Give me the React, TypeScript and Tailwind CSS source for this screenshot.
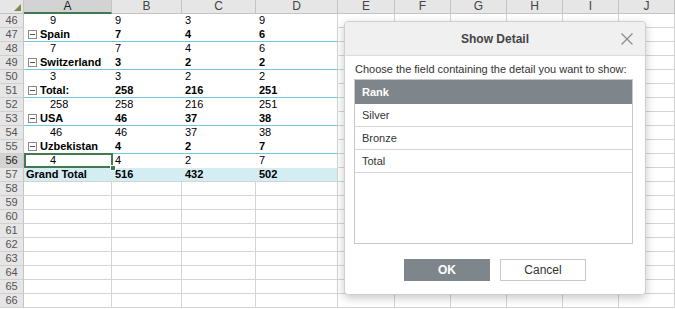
import React from "react";

type Row = {
  n: number;
  a?: string;
  kind?: "detail" | "group" | "grand" | "empty";
  b?: string;
  c?: string;
  d?: string;
};

const rows: Row[] = [
  { n: 46, kind: "detail", a: "9", b: "9", c: "3", d: "9" },
  { n: 47, kind: "group", a: "Spain", b: "7", c: "4", d: "6" },
  { n: 48, kind: "detail", a: "7", b: "7", c: "4", d: "6" },
  { n: 49, kind: "group", a: "Switzerland", b: "3", c: "2", d: "2" },
  { n: 50, kind: "detail", a: "3", b: "3", c: "2", d: "2" },
  { n: 51, kind: "group", a: "Total:", b: "258", c: "216", d: "251" },
  { n: 52, kind: "detail", a: "258", b: "258", c: "216", d: "251" },
  { n: 53, kind: "group", a: "USA", b: "46", c: "37", d: "38" },
  { n: 54, kind: "detail", a: "46", b: "46", c: "37", d: "38" },
  { n: 55, kind: "group", a: "Uzbekistan", b: "4", c: "2", d: "7" },
  { n: 56, kind: "detail", a: "4", b: "4", c: "2", d: "7" },
  { n: 57, kind: "grand", a: "Grand Total", b: "516", c: "432", d: "502" },
];
for (let i = 58; i <= 66; i++) rows.push({ n: i, kind: "empty" });

const colLetters = ["A", "B", "C", "D", "E", "F", "G", "H", "I", "J"];

function MinusBox() {
  return (
    <span className="inline-flex items-center justify-center w-[9px] h-[9px] border border-[#8a8a8a] bg-white mr-[3px] shrink-0">
      <span className="block w-[5px] h-px bg-[#555]" />
    </span>
  );
}

function RowCells({ r }: { r: Row }) {
  const selectedRow = r.n === 56;
  const header = (
    <div
      className={`h-[14px] border-r border-b border-r-[#c4c4c4] border-b-[#d0d0d0] text-[11px] leading-[13px] text-center ${
        selectedRow ? "bg-[#d3d3d3] text-[#222]" : "bg-[#e6e6e6] text-[#555]"
      }`}
    >
      {r.n}
    </div>
  );

  const emptyRest = [4, 5, 6, 7, 8, 9].map((i) => (
    <div key={i} className="h-[14px] border-r border-b border-[#d4d4d4] bg-white" />
  ));

  if (r.kind === "empty") {
    return (
      <>
        {header}
        {[0, 1, 2, 3].map((i) => (
          <div key={i} className="h-[14px] border-r border-b border-[#d4d4d4] bg-white" />
        ))}
        {emptyRest}
      </>
    );
  }

  const bold = r.kind === "group" || r.kind === "grand";
  const bottom =
    r.kind === "group"
      ? "border-b-[#6ccbdc]"
      : r.kind === "grand"
      ? "border-b-[#d4d4d4]"
      : "border-b-white";
  const bg = r.kind === "grand" ? "bg-[#d3edf3]" : "bg-white";
  const weight = bold ? "font-bold" : "font-normal";
  const base = `h-[14px] border-b ${bottom} ${bg} ${weight} text-[11px] leading-[13px] text-black whitespace-nowrap`;

  return (
    <>
      {header}
      <div
        className={`${base} relative flex items-center ${selectedRow ? "z-10" : "overflow-hidden"} ${
          r.kind === "detail" ? "pl-[26px]" : r.kind === "grand" ? "pl-[2px]" : "pl-[4px]"
        }`}
      >
        {r.kind === "group" && <MinusBox />}
        <span>{r.a}</span>
        {selectedRow && (
          <>
            <span className="absolute left-0 top-[-1px] right-[-1px] bottom-[-1px] border-2 border-[#3f7a52] pointer-events-none" />
            <span className="absolute right-[-4px] bottom-[-4px] w-[6px] h-[6px] bg-[#3f7a52] border border-white" />
          </>
        )}
      </div>
      <div className={`${base} overflow-hidden pl-[3px] flex items-center`}>{r.b}</div>
      <div className={`${base} overflow-hidden pl-[3px] flex items-center`}>{r.c}</div>
      <div className={`${base} overflow-hidden pl-[3px] flex items-center border-r border-r-[#d4d4d4]`}>{r.d}</div>
      {emptyRest}
    </>
  );
}

function Dialog() {
  return (
    <div className="absolute z-20 left-[344px] top-[21px] w-[302px] h-[274px] rounded-[4px] border border-[#cfcfcf] bg-white shadow-[0_3px_10px_rgba(0,0,0,0.22)] flex flex-col font-['Liberation_Sans',Arial,sans-serif]">
      <div className="relative h-[34px] shrink-0 bg-[#f0f0f0] border-b border-[#dcdcdc] rounded-t-[4px] flex items-center justify-center">
        <span className="text-[12px] font-bold text-[#444]">Show Detail</span>
        <svg className="absolute right-[12px] top-[11px]" width="12" height="12" viewBox="0 0 12 12">
          <path d="M0.5 0.5 L11.5 11.5 M11.5 0.5 L0.5 11.5" stroke="#8a8a8a" strokeWidth="1.2" fill="none" />
        </svg>
      </div>
      <div className="flex flex-col pl-[9px] pr-[12px] pt-[6px]">
        <div className="text-[11px] leading-[14px] text-[#333] pl-[1px] whitespace-nowrap">
          Choose the field containing the detail you want to show:
        </div>
        <div className="mt-[3px] h-[165px] border border-[#c8c8c8] flex flex-col">
          <div className="h-[24px] shrink-0 bg-[#7f868b] text-white font-bold text-[11px] flex items-center pl-[7px]">
            Rank
          </div>
          {["Silver", "Bronze", "Total"].map((t) => (
            <div
              key={t}
              className="h-[23px] shrink-0 border-b border-[#d4d4d4] text-[11px] text-[#333] flex items-center pl-[7px]"
            >
              {t}
            </div>
          ))}
        </div>
        <div className="mt-[15px] flex justify-center gap-[10px] pl-[3px]">
          <div className="w-[86px] h-[22px] bg-[#7f868b] text-white font-bold text-[12px] flex items-center justify-center">
            OK
          </div>
          <div className="w-[86px] h-[22px] bg-white border border-[#c8c8c8] text-[#333] text-[12px] flex items-center justify-center">
            Cancel
          </div>
        </div>
      </div>
    </div>
  );
}

export default function App() {
  return (
    <div className="relative w-[675px] h-[309px] overflow-hidden bg-white font-['Liberation_Sans',Arial,sans-serif]">
      <div className="grid grid-cols-[24px_88px_70px_74px_82px_57px_56px_56px_56px_56px_56px]">
        <div className="relative h-[14px] bg-[#e6e6e6] border-r border-b border-r-[#c4c4c4] border-b-[#c4c4c4]">
          <svg className="absolute right-[2px] bottom-[2px]" width="7" height="7" viewBox="0 0 7 7">
            <path d="M7 0 L7 7 L0 7 Z" fill="#7f8c4c" />
          </svg>
        </div>
        {colLetters.map((l, i) => (
          <div
            key={l}
            className={`h-[14px] text-[12px] leading-[13px] text-center border-r border-r-[#c4c4c4] ${
              i === 0
                ? "bg-[#d3d3d3] text-[#222] border-b-2 border-b-[#3f7a52] leading-[12px]"
                : "bg-[#e6e6e6] text-[#444] border-b border-b-[#c4c4c4]"
            }`}
          >
            {l}
          </div>
        ))}
        {rows.map((r) => (
          <RowCells key={r.n} r={r} />
        ))}
      </div>
      <Dialog />
    </div>
  );
}
